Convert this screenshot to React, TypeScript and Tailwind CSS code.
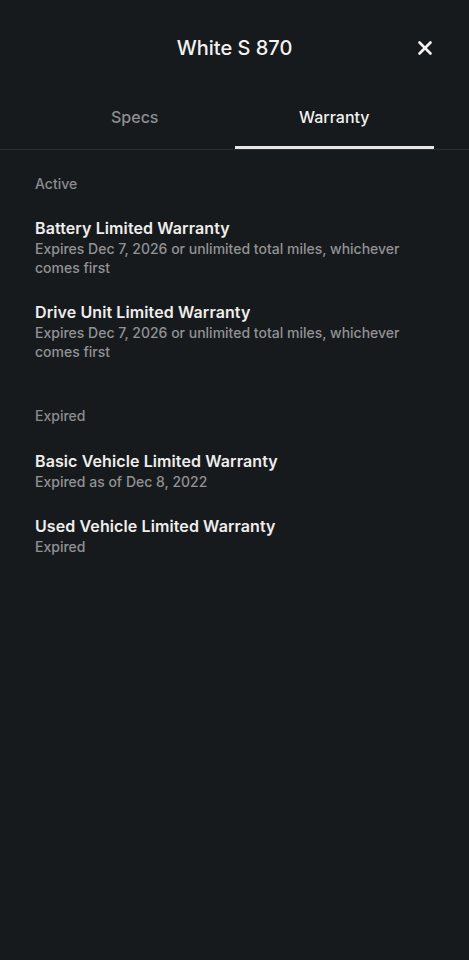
import { X } from "lucide-react";

const active = [
  {
    title: "Battery Limited Warranty",
    detail: "Expires Dec 7, 2026 or unlimited total miles, whichever comes first",
  },
  {
    title: "Drive Unit Limited Warranty",
    detail: "Expires Dec 7, 2026 or unlimited total miles, whichever comes first",
  },
];

const expired = [
  { title: "Basic Vehicle Limited Warranty", detail: "Expired as of Dec 8, 2022" },
  { title: "Used Vehicle Limited Warranty", detail: "Expired" },
];

function WarrantyItem({ title, detail }: { title: string; detail: string }) {
  return (
    <div className="py-[12px]">
      <div className="text-[16px] leading-[22px] font-semibold tracking-[0.1px] text-[#eeeeee]">{title}</div>
      <div className="text-[14px] leading-[19px] font-medium text-[#909295]">{detail}</div>
    </div>
  );
}

export default function App() {
  return (
    <div
      className="min-h-[960px] w-full bg-[#171a1c] text-white"
      style={{ fontFamily: "Inter, 'Noto Sans', sans-serif" }}
    >
      <header className="relative flex h-[96px] items-center justify-center">
        <h1 className="text-[20px] font-medium text-[#f2f2f2]">White S 870</h1>
        <button className="absolute right-[33px] top-[37px] text-[#f2f2f2]">
          <X size={22} strokeWidth={2.9} />
        </button>
      </header>

      <nav className="border-b border-[#2c2f32]">
        <div className="mx-[35px] flex">
          <div className="flex h-[53px] flex-1 items-center justify-center pb-[12px] text-[16px] font-medium text-[#8c8e91]">
            Specs
          </div>
          <div className="flex h-[53px] flex-1 items-center justify-center border-b-[3px] border-[#e6e6e6] pb-[9px] text-[16px] font-medium text-[#f2f2f2]">
            Warranty
          </div>
        </div>
      </nav>

      <main className="px-[35px] pt-[24px]">
        <section>
          <div className="text-[14px] leading-[20px] font-medium text-[#8a8c8f]">Active</div>
          <div className="mt-[11px]">
            {active.map((w) => (
              <WarrantyItem key={w.title} {...w} />
            ))}
          </div>
        </section>
        <section className="mt-[33px]">
          <div className="text-[14px] leading-[20px] font-medium text-[#8a8c8f]">Expired</div>
          <div className="mt-[12px]">
            {expired.map((w) => (
              <WarrantyItem key={w.title} {...w} />
            ))}
          </div>
        </section>
      </main>
    </div>
  );
}
